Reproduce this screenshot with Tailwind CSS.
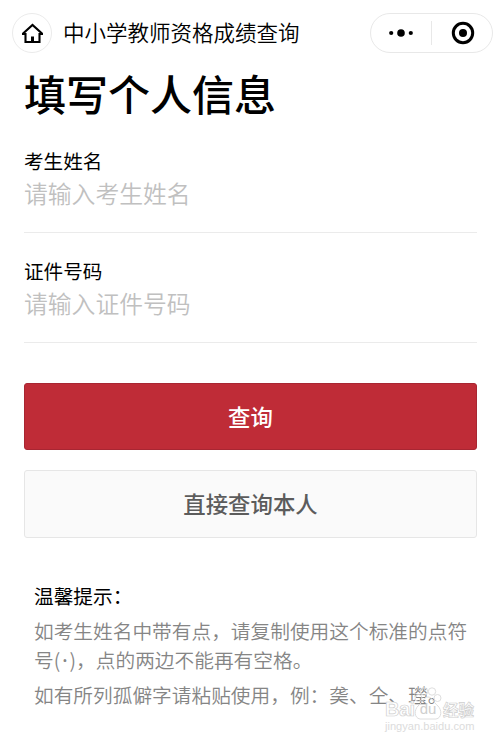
<!DOCTYPE html>
<html lang="zh-CN">
<head>
    <meta charset="UTF-8">
    <meta name="viewport" content="width=device-width, initial-scale=1.0">
    <title>中小学教师资格成绩查询</title>
    <script src="https://cdn.jsdelivr.net/npm/@tailwindcss/browser@4"></script>
</head>
<body class="bg-white text-black font-['Noto_Sans_CJK_SC',sans-serif]">
    <div class="relative h-[744px] w-[502px] overflow-hidden">
        <!-- Navigation bar -->
        <header class="flex items-center pt-[13px] pl-3 pr-[9px]">
            <button type="button" aria-label="首页" class="flex h-10 w-10 items-center justify-center rounded-full border border-[#ebebeb]">
                <svg class="h-[22px] w-[22px]" viewBox="0 0 22 22" fill="none" stroke="#000" stroke-width="2">
                    <path d="M1 12h3.500v8h14v-8H22M1.500 12L11.500 3l10 9" stroke-width="2.100"/>
                    <path d="M11.500 20v-5.500" stroke-width="3"/>
                </svg>
            </button>
            <div class="ml-[11px] flex-1 whitespace-nowrap text-[21.500px] leading-[38px] pb-0.5 font-[350]">中小学教师资格成绩查询</div>
            <div class="flex h-10 w-[123px] items-center rounded-full border border-[#e8e8e8]">
                <button type="button" aria-label="更多" class="flex w-[60px] items-center justify-center">
                    <svg class="h-2 w-6" viewBox="0 0 24 8">
                        <circle cx="2.200" cy="4" r="2.100"/>
                        <circle cx="12" cy="4" r="3.800"/>
                        <circle cx="21.800" cy="4" r="2.100"/>
                    </svg>
                </button>
                <span class="h-6 w-px bg-[#e8e8e8]"></span>
                <button type="button" aria-label="关闭" class="flex flex-1 items-center justify-center pl-0.5">
                    <svg class="h-6 w-6" viewBox="0 0 24 24">
                        <circle cx="12" cy="12" r="9.700" fill="none" stroke="#000" stroke-width="3"/>
                        <circle cx="12" cy="12" r="4"/>
                    </svg>
                </button>
            </div>
        </header>

        <main class="px-6 pr-[25px]">
            <h1 class="mt-[9px] text-[42px] leading-[62px] font-medium">填写个人信息</h1>

            <!-- Form -->
            <form>
                <div class="mt-[22px] h-[87px] border-b border-[#ebebeb]">
                    <label for="name" class="block text-[19.600px] leading-[30px]">考生姓名</label>
                    <input type="text" id="name" placeholder="请输入考生姓名" class="block h-[34px] w-full text-[23.800px] leading-[34px] font-[350] placeholder:text-[#c0c0c0] focus:outline-none">
                </div>
                <div class="mt-[23px] h-[87px] border-b border-[#ebebeb]">
                    <label for="idNumber" class="block text-[19.600px] leading-[30px]">证件号码</label>
                    <input type="text" id="idNumber" placeholder="请输入证件号码" class="block h-[34px] w-full text-[23.800px] leading-[34px] font-[350] placeholder:text-[#c0c0c0] focus:outline-none">
                </div>

                <button type="submit" class="mt-10 block h-[67px] w-full rounded-[3px] border border-[#a82632] bg-[#bf2c37] text-[22.400px] font-medium text-white">查询</button>
                <button type="button" class="mt-5 block h-[68px] w-full rounded-[3px] border border-[#e6e6e6] bg-[#fafafa] text-[22.400px] font-medium text-[#5c5c5c]">直接查询本人</button>
            </form>

            <!-- Tips -->
            <section class="mt-[43px] ml-2.5 text-[19.700px] leading-[29px] font-[350] whitespace-nowrap text-[#858585]">
                <h2 class="leading-[30px] font-normal text-black">温馨提示：</h2>
                <p class="mt-[5px]">如考生姓名中带有点，请复制使用这个标准的点符<br>号(<span class="px-[2px] font-['Noto_Sans',sans-serif] font-medium">·</span>)，点的两边不能再有空格。</p>
                <p class="mt-[5px]">如有所列孤僻字请粘贴使用，例：䶮、仝、㼆。</p>
            </section>
        </main>

        <!-- Watermark -->
        <div class="absolute top-[690px] left-[385px] text-[#dcdcdc]">
            <div class="flex h-[30px] items-end font-['Liberation_Sans',sans-serif] text-[20px] leading-[22px] font-bold text-white [-webkit-text-stroke:0.7px_#cfcfcf]">
                <span class="w-[30px] tracking-tight">Bai</span>
                <span class="relative w-[26px] text-center text-[15px]">
                    <svg class="absolute -top-[11px] -left-px h-[34px] w-7" viewBox="0 0 28 34" fill="none" stroke="#dedede">
                        <circle cx="4.500" cy="11" r="3.500"/>
                        <circle cx="10" cy="4.500" r="3.700"/>
                        <circle cx="18" cy="4.500" r="3.700"/>
                        <circle cx="23.500" cy="11" r="3.500"/>
                        <path d="M14 10c4 0 5 5 10 9 4 4 4 12-2 13H6c-6-1-6-9-2-13 5-4 6-9 10-9z"/>
                    </svg>
                    <span class="relative font-normal text-[#cfcfcf] [-webkit-text-stroke:0]">du</span>
                </span>
                <span class="ml-0.5 font-['Noto_Sans_CJK_SC',sans-serif] text-[15.500px]">经验</span>
            </div>
            <div class="font-['Liberation_Sans',sans-serif] text-[11.100px] leading-3">jingyan.baidu.com</div>
        </div>
    </div>
</body>
</html>
